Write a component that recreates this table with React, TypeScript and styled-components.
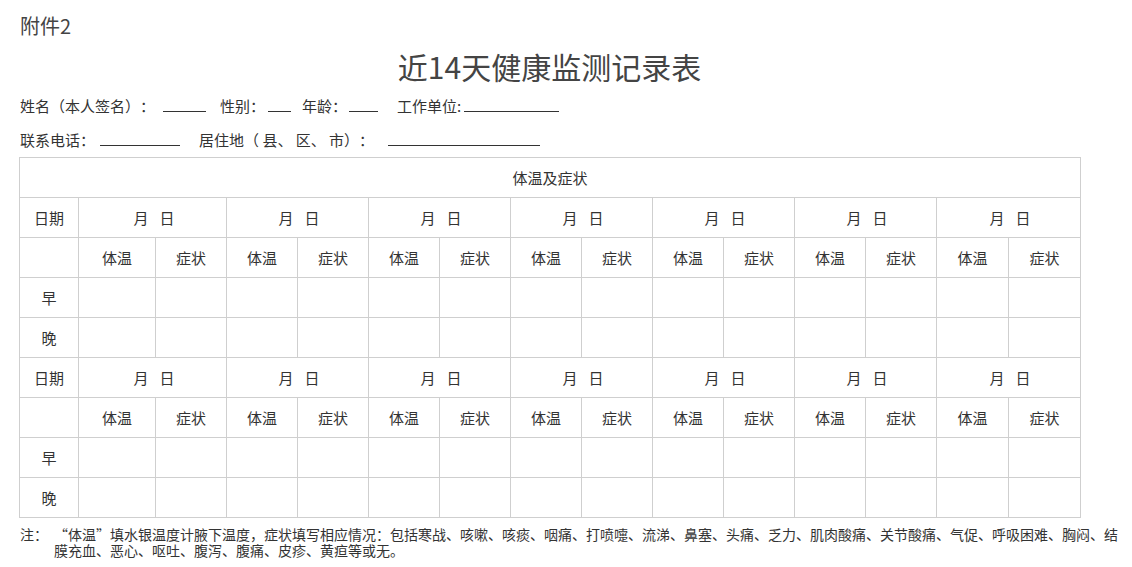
import React from "react";
import styled, { createGlobalStyle } from "styled-components";

const Global = createGlobalStyle`
  html, body { margin: 0; padding: 0; background: #fff; }
  body {
    font-family: "Noto Sans CJK SC", "Noto Sans", sans-serif;
    color: #333;
    text-spacing-trim: space-all;
  }
`;

const Page = styled.div`
  width: 1061px;
  padding: 12px 0 0 19px;
`;

const Attachment = styled.div`
  font-size: 20px;
  line-height: 28px;
  padding-left: 1px;
  color: #444;
`;

const Title = styled.h1`
  margin: 8px 0 0;
  text-align: center;
  font-size: 30px;
  font-weight: 400;
  line-height: 36px;
  color: #444;
`;

const InfoLine = styled.div<{ $top: number }>`
  display: flex;
  align-items: baseline;
  font-size: 15px;
  line-height: 20px;
  padding-left: 1px;
  margin-top: ${(p) => p.$top}px;
`;

const Field = styled.span<{ $gap: number }>`
  display: inline-flex;
  align-items: baseline;
  margin-left: ${(p) => p.$gap}px;
  white-space: pre;
`;

const Blank = styled.span<{ $w: number; $ml: number }>`
  display: inline-block;
  width: ${(p) => p.$w}px;
  height: 0;
  margin-left: ${(p) => p.$ml}px;
  margin-bottom: -2px;
  border-bottom: 1px solid #333;
`;

const Table = styled.table`
  margin-top: 7px;
  width: 1062px;
  border-collapse: collapse;
  table-layout: fixed;
  font-size: 15px;
  color: #333;
`;

const Cell = styled.td<{ $shift?: number }>`
  border: 1px solid #cfcfcf;
  height: 39px;
  padding: 0 0 0 ${(p) => p.$shift ?? 0}px;
  text-align: center;
  vertical-align: middle;
  line-height: 20px;
`;

const DayGap = styled.span`
  display: inline-block;
  width: 11px;
`;

const Note = styled.div`
  display: flex;
  margin-top: 8px;
  font-size: 14px;
  line-height: 16px;
  color: #333;
  padding-left: 1px;
  width: 1110px;
`;

const NoteLabel = styled.span`
  flex: 0 0 34px;
`;

const NoteBody = styled.span`
  flex: 0 0 1068px;
`;

const widths = [59, 77, 71, 71, 71, 71, 71, 71, 71, 71, 71, 71, 71, 72, 72];
const days = Array.from({ length: 7 });

function Block() {
  return (
    <>
      <tr>
        <Cell>日期</Cell>
        {days.map((_, i) => (
          <Cell key={i} colSpan={2} $shift={3}>
            月<DayGap />日
          </Cell>
        ))}
      </tr>
      <tr>
        <Cell />
        {days.map((_, i) => (
          <React.Fragment key={i}>
            <Cell>体温</Cell>
            <Cell>症状</Cell>
          </React.Fragment>
        ))}
      </tr>
      {["早", "晚"].map((t) => (
        <tr key={t}>
          <Cell>{t}</Cell>
          {Array.from({ length: 14 }).map((_, i) => (
            <Cell key={i} />
          ))}
        </tr>
      ))}
    </>
  );
}

export default function App() {
  return (
    <Page>
      <Global />
      <Attachment>附件2</Attachment>
      <Title>近14天健康监测记录表</Title>
      <InfoLine $top={12}>
        <Field $gap={0}>姓名（本人签名）：<Blank $w={43} $ml={8} /></Field>
        <Field $gap={14}>性别：<Blank $w={23} $ml={3} /></Field>
        <Field $gap={11}>年龄：<Blank $w={29} $ml={2} /></Field>
        <Field $gap={19}>工作单位:<Blank $w={95} $ml={3} /></Field>
      </InfoLine>
      <InfoLine $top={14}>
        <Field $gap={0}>联系电话：<Blank $w={80} $ml={5} /></Field>
        <Field $gap={19}>居住地（ 县、 区、 市）：<Blank $w={152} $ml={14} /></Field>
      </InfoLine>
      <Table>
        <colgroup>
          {widths.map((w, i) => (
            <col key={i} style={{ width: w }} />
          ))}
        </colgroup>
        <tbody>
          <tr>
            <Cell colSpan={15}>体温及症状</Cell>
          </tr>
          <Block />
          <Block />
        </tbody>
      </Table>
      <Note>
        <NoteLabel>注：</NoteLabel>
        <NoteBody>
          “体温”填水银温度计腋下温度，症状填写相应情况：包括寒战、咳嗽、咳痰、咽痛、打喷嚏、流涕、鼻塞、头痛、乏力、肌肉酸痛、关节酸痛、气促、呼吸困难、胸闷、结膜充血、恶心、呕吐、腹泻、腹痛、皮疹、黄疸等或无。
        </NoteBody>
      </Note>
    </Page>
  );
}
